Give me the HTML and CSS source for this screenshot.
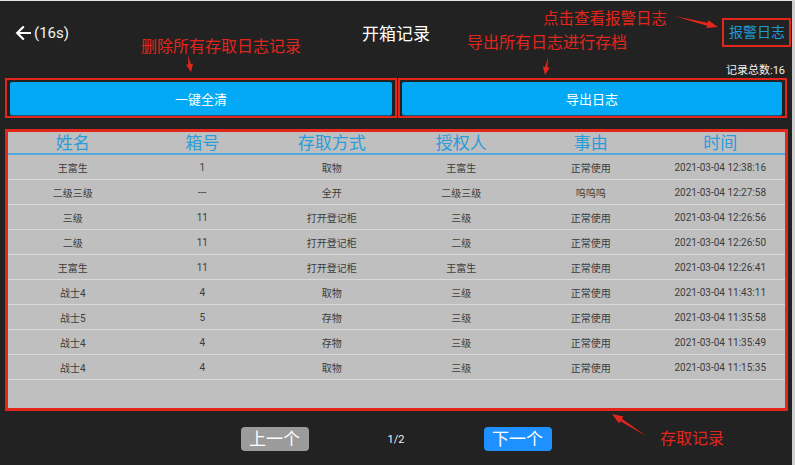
FILE: index.html
```html
<!DOCTYPE html>
<html lang="zh">
<head>
<meta charset="utf-8">
<title>开箱记录</title>
<link rel="stylesheet" href="styles.css">
</head>
<body>
<div class="screen">
  <header class="topbar">
    <div class="back">
      <svg class="back-icon" width="16" height="14" viewBox="0 0 16 14"><path d="M15 7H2.5M8 1.2L2.2 7L8 12.8" fill="none" stroke="#fff" stroke-width="2.2" stroke-linecap="square"/></svg>
      <span class="countdown">(16s)</span>
    </div>
    <h1 class="title">开箱记录</h1>
    <div class="alarm-wrap"><span class="alarm mark-box">报警日志</span></div>
  </header>
  <div class="total">记录总数:16</div>
  <div class="actions">
    <div class="mark-box action-box left"><button class="btn-main">一键全清</button></div>
    <div class="mark-box action-box right"><button class="btn-main">导出日志</button></div>
  </div>
  <section class="records">
    <div class="row head">
      <div>姓名</div><div>箱号</div><div>存取方式</div><div>授权人</div><div>事由</div><div>时间</div>
    </div>
    <div class="row"><div>王富生</div><div>1</div><div>取物</div><div>王富生</div><div>正常使用</div><div>2021-03-04 12:38:16</div></div>
    <div class="row"><div>二级三级</div><div>---</div><div>全开</div><div>二级三级</div><div>呜呜呜</div><div>2021-03-04 12:27:58</div></div>
    <div class="row"><div>三级</div><div>11</div><div>打开登记柜</div><div>三级</div><div>正常使用</div><div>2021-03-04 12:26:56</div></div>
    <div class="row"><div>二级</div><div>11</div><div>打开登记柜</div><div>二级</div><div>正常使用</div><div>2021-03-04 12:26:50</div></div>
    <div class="row"><div>王富生</div><div>11</div><div>打开登记柜</div><div>王富生</div><div>正常使用</div><div>2021-03-04 12:26:41</div></div>
    <div class="row"><div>战士4</div><div>4</div><div>取物</div><div>三级</div><div>正常使用</div><div>2021-03-04 11:43:11</div></div>
    <div class="row"><div>战士5</div><div>5</div><div>存物</div><div>三级</div><div>正常使用</div><div>2021-03-04 11:35:58</div></div>
    <div class="row"><div>战士4</div><div>4</div><div>存物</div><div>三级</div><div>正常使用</div><div>2021-03-04 11:35:49</div></div>
    <div class="row"><div>战士4</div><div>4</div><div>取物</div><div>三级</div><div>正常使用</div><div>2021-03-04 11:15:35</div></div>
  </section>
  <nav class="pager">
    <button class="page-btn prev">上一个</button>
    <span class="page-no">1/2</span>
    <button class="page-btn next">下一个</button>
  </nav>

  <div class="note note-alarm">点击查看报警日志</div>
  <div class="note note-clear">删除所有存取日志记录</div>
  <div class="note note-export">导出所有日志进行存档</div>
  <div class="note note-records">存取记录</div>
  <svg class="arrows" width="795" height="465" viewBox="0 0 795 465">
    <polygon points="674,16 707.8,22.75 708.4,20.3 718,27 706.4,28.1 707.0,25.65"/>
    <polygon points="188,55 190.8,63.9 193.05,63.5 191,72 186.15,64.7 188.4,64.3"/>
    <polygon points="548,57 547.5,67.3 549.75,67.7 545,75 542.85,66.5 545.1,66.9"/>
    <polygon points="646,436 622.0,418.7 623.4,416.6 612,414 619.0,423.4 620.4,421.3"/>
  </svg>
</div>
</body>
</html>
```

FILE: styles.css
```css
* { box-sizing: border-box; }
html, body { margin: 0; padding: 0; }
body {
  width: 795px;
  height: 465px;
  overflow: hidden;
  background: #222222;
  font-family: Roboto, "Noto Sans CJK SC", sans-serif;
}
.screen {
  position: relative;
  width: 795px;
  height: 465px;
  background: #222222;
  border-top: 1px solid #e2e2e2;
  border-right: 3px solid #cfcfcf;
}
.topbar {
  height: 61px;
  display: grid;
  grid-template-columns: 1fr auto 1fr;
  align-items: center;
  padding: 0 1px;
}
.back {
  display: flex;
  align-items: center;
  gap: 3px;
  color: #fff;
  margin-top: 2px;
  margin-left: 14px;
}
.back-icon { display: block; }
.countdown { font-size: 15px; color: #f2f2f2; }
.title {
  margin: 0;
  font-size: 17px;
  font-weight: 400;
  color: #fff;
  margin-top: 2px;
}
.alarm-wrap { display: flex; justify-content: flex-end; }
.alarm {
  font-size: 14px;
  line-height: 17px;
  color: #1e9bd8;
  padding: 4px 4px 4px 5px;
  margin-top: 2px;
}
.mark-box { border: 2px solid #e3261c; }
.total {
  height: 15px;
  line-height: 15px;
  font-size: 11px;
  color: #f0f0f0;
  text-align: right;
  padding-right: 7px;
  margin-top: 1px;
}
.actions {
  display: flex;
  gap: 1px;
  padding-left: 5px;
  height: 40px;
}
.action-box {
  height: 40px;
  padding: 2px 3px 1px 3px;
}
.action-box.left { width: 392px; }
.action-box.right { width: 389px; padding-left: 2px; }
.btn-main {
  display: block;
  width: 100%;
  height: 100%;
  border: 0;
  border-radius: 2px;
  background: #03a9f4;
  color: #fff;
  font-family: inherit;
  font-size: 13px;
  box-shadow: 0 1px 0 #0b5f7f;
}
.records {
  margin: 11px 0 0 5px;
  width: 783px;
  height: 282px;
  border: 3px solid #e3261c;
  background: #bfbfbf;
}
.row {
  display: grid;
  grid-template-columns: repeat(6, 1fr);
  align-items: center;
  text-align: center;
  height: 25px;
  border-bottom: 1px solid #dadada;
  font-size: 10px;
  color: #3c3c3c;
}
.row.head {
  height: 23px;
  border-bottom: 2px solid #54a9e0;
  font-size: 17px;
  color: #2a9cdc;
  line-height: 20px;
}
.pager {
  display: flex;
  justify-content: center;
  align-items: center;
  gap: 79px;
  padding-top: 16px;
}
.page-btn {
  width: 68px;
  height: 24px;
  border: 0;
  border-radius: 4px;
  color: #fff;
  font-family: inherit;
  font-size: 17px;
  line-height: 24px;
  padding: 0;
}
.page-btn.prev { background: #9b9b9b; }
.page-btn.next { background: #1e90ff; }
.page-no { font-size: 11px; color: #f0f0f0; width: 17px; text-align: center; }
.note {
  position: absolute;
  color: #e3261c;
  font-size: 16px;
  line-height: 18px;
  white-space: nowrap;
}
.note-alarm { left: 543px; top: 9px; font-size: 15.5px; }
.note-clear { left: 141px; top: 37px; }
.note-export { left: 467px; top: 33px; }
.note-records { left: 660px; top: 429px; }
.arrows {
  position: absolute;
  left: 0;
  top: -1px;
  fill: #e3261c;
  pointer-events: none;
}
```
